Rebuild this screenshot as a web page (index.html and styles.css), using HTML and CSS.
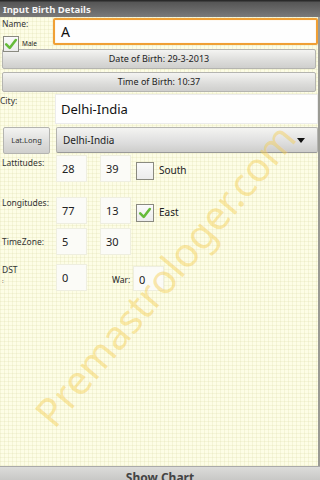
FILE: index.html
```html
<!DOCTYPE html>
<html>
<head>
<meta charset="utf-8">
<link rel="stylesheet" href="styles.css">
</head>
<body>
<div class="screen">
  <div class="titlebar">Input Birth Details</div>
  <div class="content">
    <div class="row name-row">
      <div class="name-left">
        <div class="lbl">Name:</div>
        <div class="male">
          <span class="check checked"><svg viewBox="0 0 16 16" width="14" height="14"><path d="M2.5 8.5 L6.5 12.5 L13.5 3.5" fill="none" stroke="#66bb3a" stroke-width="3" stroke-linecap="round" stroke-linejoin="round"/></svg></span>
          <span class="male-txt">Male</span>
        </div>
      </div>
      <div class="input focused">A</div>
    </div>
    <div class="btn wide">Date of Birth: 29-3-2013</div>
    <div class="btn wide second">Time of Birth: 10:37</div>
    <div class="row city-row">
      <div class="lbl city-lbl">City:</div>
      <div class="input city">Delhi-India</div>
    </div>
    <div class="row latlong-row">
      <div class="btn small">Lat.Long</div>
      <div class="spinner"><span>Delhi-India</span><span class="tri"></span></div>
    </div>
    <div class="row coord lat">
      <div class="lbl clbl">Lattitudes:</div>
      <div class="num n1">28</div>
      <div class="num n2">39</div>
      <span class="check box"></span>
      <span class="ctext">South</span>
    </div>
    <div class="row coord lon">
      <div class="lbl clbl">Longitudes:</div>
      <div class="num n1">77</div>
      <div class="num n2">13</div>
      <span class="check box checked"><svg viewBox="0 0 16 16" width="14" height="14"><path d="M2.5 8.5 L6.5 12.5 L13.5 3.5" fill="none" stroke="#66bb3a" stroke-width="3" stroke-linecap="round" stroke-linejoin="round"/></svg></span>
      <span class="ctext">East</span>
    </div>
    <div class="row coord tz">
      <div class="lbl clbl mid">TimeZone:</div>
      <div class="num n1">5</div>
      <div class="num n2">30</div>
    </div>
    <div class="row coord dst">
      <div class="lbl clbl dstl"><div>DST</div><div class="colon">:</div></div>
      <div class="num n1">0</div>
      <span class="war">War:</span>
      <div class="num n3">0</div>
    </div>
    <div class="watermark">Premastrologer.com</div>
  </div>
  <div class="bottom"><span>Show Chart</span></div>
</div>
</body>
</html>
```
FILE: styles.css
```css
html, body {
  margin: 0;
  padding: 0;
}
body {
  width: 320px;
  height: 480px;
  overflow: hidden;
  font-family: "Noto Sans", "DejaVu Sans", sans-serif;
  color: #222;
}
.screen {
  width: 320px;
  height: 480px;
  display: flex;
  flex-direction: column;
  overflow: hidden;
}
.titlebar {
  height: 17px;
  flex: none;
  background: linear-gradient(#2a2a2a 0, #2a2a2a 1px, #555 2px, #7a7a7a 100%);
  color: #f4f4f4;
  font-size: 9.5px;
  font-weight: bold;
  line-height: 19px;
  padding-left: 3px;
  box-sizing: border-box;
}
.content {
  flex: 1;
  position: relative;
  overflow: hidden;
  border-right: 2px solid #9a9a94;
  background-color: #fdfde6;
  background-image:
    repeating-linear-gradient(90deg, rgba(215,215,160,0.22) 0, rgba(215,215,160,0.22) 1px, transparent 1px, transparent 4px),
    repeating-linear-gradient(0deg, rgba(215,215,160,0.22) 0, rgba(215,215,160,0.22) 1px, transparent 1px, transparent 4px);
}
.row {
  display: flex;
  position: relative;
}
.lbl {
  font-size: 8.5px;
  line-height: 10px;
  color: #333;
}
.name-row {
  height: 32px;
}
.name-left {
  width: 53px;
  flex: none;
  padding-left: 2px;
  padding-top: 2px;
  box-sizing: border-box;
}
.male {
  display: flex;
  align-items: flex-end;
  margin-top: 7px;
  margin-left: 1px;
}
.male-txt {
  font-size: 6.5px;
  margin-left: 3px;
  margin-bottom: 4px;
}
.check {
  width: 16px;
  height: 16px;
  box-sizing: border-box;
  border: 1px solid #8a8a80;
  background: linear-gradient(#fafafa, #ececec);
  display: flex;
  align-items: center;
  justify-content: center;
  flex: none;
}
.input {
  background: #fefefe;
  box-sizing: border-box;
  color: #111;
}
.input.focused {
  margin-top: 1px;
  width: 265px;
  height: 27px;
  border: 2px solid #f0a035;
  box-shadow: inset 0 0 1px #f7c880;
  border-radius: 2px;
  font-size: 14px;
  line-height: 23px;
  padding-left: 6px;
}
.btn {
  box-sizing: border-box;
  background: linear-gradient(#f4f4f2, #dcdcda 60%, #cfcfcd);
  border: 1px solid #b4b4b0;
  border-radius: 2px;
  text-align: center;
  color: #222;
}
.btn.wide {
  margin: 0 2px;
  height: 20px;
  font-size: 9px;
  line-height: 18px;
}
.btn.second {
  margin-top: 3px;
}
.city-row {
  margin-top: 2px;
  height: 31px;
}
.city-lbl {
  width: 55px;
  flex: none;
  margin-top: 2px;
}
.input.city {
  width: 263px;
  height: 30px;
  border: 1px solid #ececec;
  font-size: 13px;
  line-height: 28px;
  padding-left: 5px;
}
.latlong-row {
  margin-top: 2px;
  height: 27px;
  align-items: flex-start;
}
.btn.small {
  margin-left: 3px;
  width: 47px;
  height: 27px;
  font-size: 7.5px;
  line-height: 25px;
  color: #333;
}
.spinner {
  margin-left: 6px;
  width: 262px;
  height: 26px;
  box-sizing: border-box;
  background: linear-gradient(#f4f4f2, #dedede 60%, #cdcdcb);
  border: 1px solid #b4b4b0;
  border-bottom-color: #999;
  border-radius: 2px;
  display: flex;
  align-items: center;
  justify-content: space-between;
  padding: 0 12px 0 6px;
  font-size: 10px;
  color: #222;
}
.tri {
  width: 0;
  height: 0;
  border-left: 4px solid transparent;
  border-right: 4px solid transparent;
  border-top: 5px solid #111;
}
.coord {
  height: 27px;
  align-items: center;
}
.lat { margin-top: 1px; }
.lon { margin-top: 15px; }
.tz { margin-top: 4px; }
.dst { margin-top: 9px; align-items: flex-start; }
.clbl {
  width: 56px;
  flex: none;
  padding-left: 2px;
  box-sizing: border-box;
  align-self: flex-start;
  margin-top: 3px;
}
.lon .clbl { margin-top: 1px; }
.clbl.mid { align-self: center; margin-top: 1px; }
.dstl { line-height: 9px; margin-top: 1px; }
.colon { margin-top: 4px; font-size: 6px; line-height: 6px; }
.num {
  width: 31px;
  height: 27px;
  box-sizing: border-box;
  background: #fbfbf7;
  border: 1px solid #eeeee0;
  font-size: 11px;
  line-height: 25px;
  padding-left: 5px;
  color: #222;
  flex: none;
}
.n2 { margin-left: 13px; }
.box {
  margin-left: 5px;
  width: 18px;
  height: 18px;
  margin-top: 4px;
}
.ctext {
  font-size: 10px;
  margin-left: 5px;
  margin-top: 3px;
}
.war {
  margin-left: 25px;
  font-size: 8.5px;
  margin-top: 10px;
  width: 21px;
}
.n3 { margin-top: 2px; height: 25px; }
.watermark {
  position: absolute;
  left: 0;
  top: 0;
  width: 420px;
  text-align: center;
  font-size: 40px;
  line-height: 48px;
  color: rgba(245, 205, 80, 0.45);
  transform-origin: center center;
  transform: translate(-45px, 234px) rotate(-50deg);
  pointer-events: none;
  white-space: nowrap;
}
.bottom {
  height: 14px;
  flex: none;
  background: linear-gradient(#dcdcda, #c8c8c6);
  border-top: 1px solid #aaa;
  box-sizing: border-box;
  text-align: center;
  overflow: hidden;
}
.bottom span {
  display: block;
  font-size: 12px;
  font-weight: bold;
  line-height: 14px;
  padding-top: 4px;
  color: #444;
}
```
